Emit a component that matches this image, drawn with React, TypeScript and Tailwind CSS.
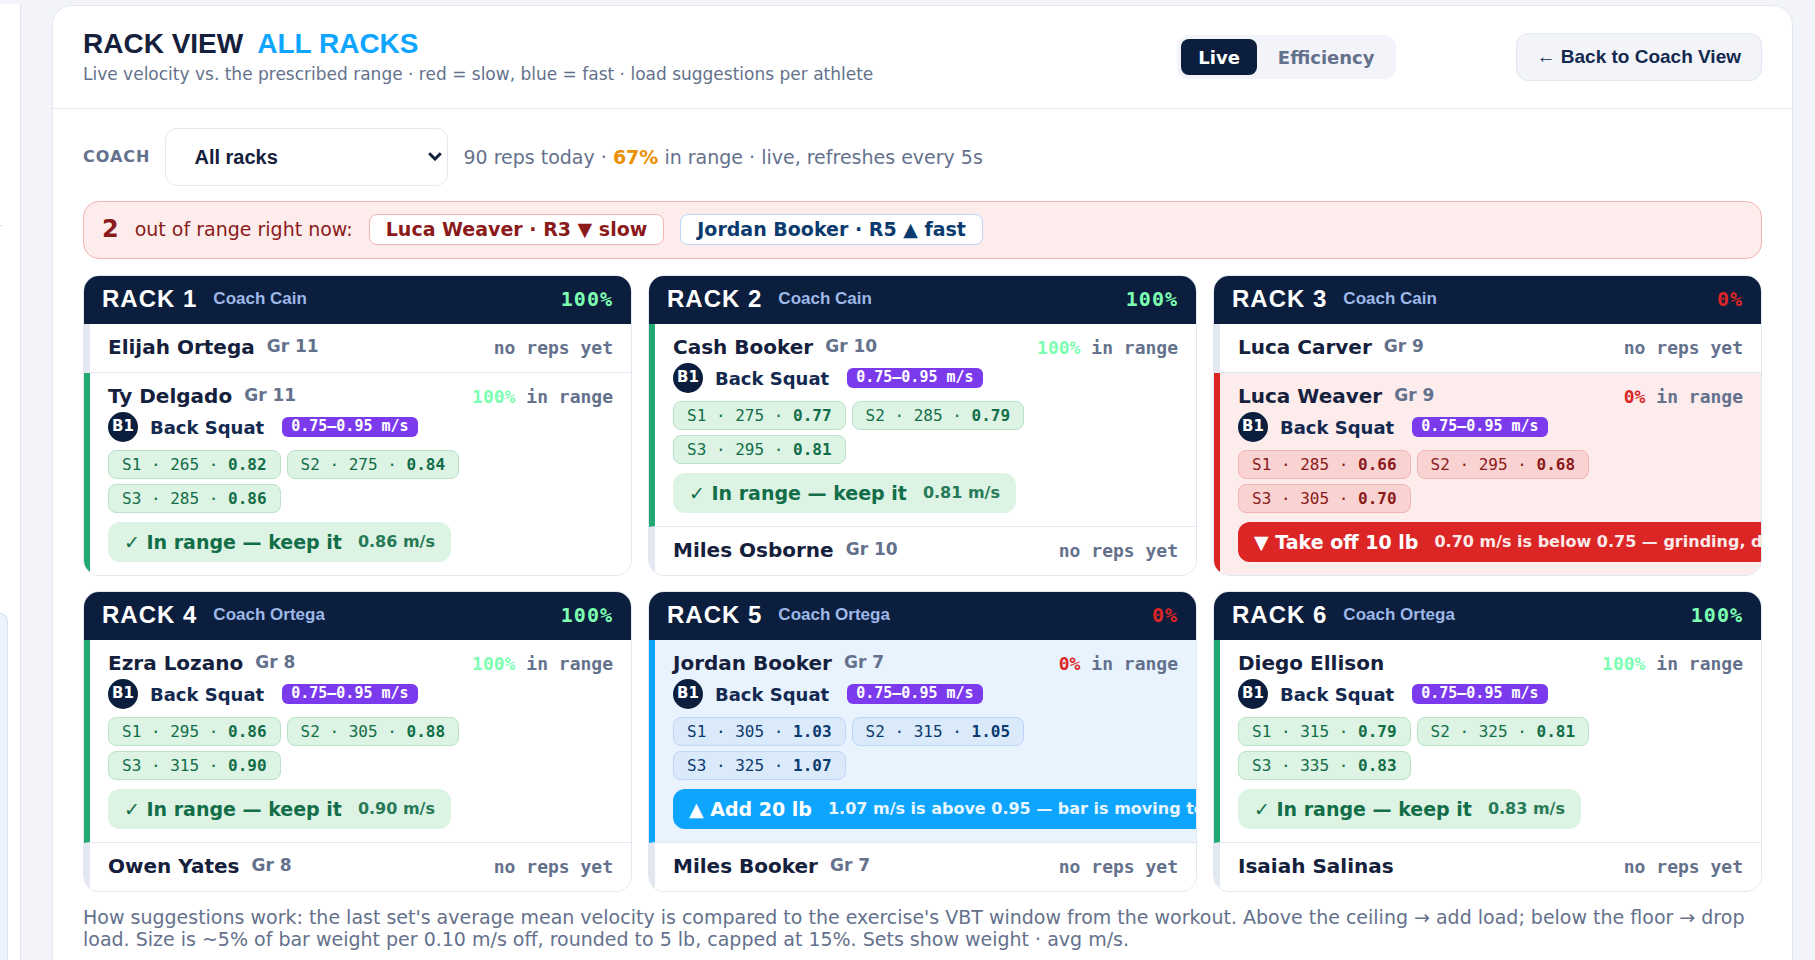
import { useState } from 'react';
import clsx from 'clsx';

type Tone = 'ok' | 'slow' | 'fast' | 'idle';

type Athlete = {
  name: string;
  grade?: string;
  tone: Tone;
  pct?: number;
  sets?: [number, string][];
  call?: string;
  note?: string;
};

type Rack = { id: number; coach: string; pct: number; athletes: Athlete[] };

const RACKS: Rack[] = [
  {
    id: 1,
    coach: 'Coach Cain',
    pct: 100,
    athletes: [
      { name: 'Elijah Ortega', grade: 'Gr 11', tone: 'idle' },
      {
        name: 'Ty Delgado',
        grade: 'Gr 11',
        tone: 'ok',
        pct: 100,
        sets: [[265, '0.82'], [275, '0.84'], [285, '0.86']],
        call: '✓ In range — keep it',
        note: '0.86 m/s',
      },
    ],
  },
  {
    id: 2,
    coach: 'Coach Cain',
    pct: 100,
    athletes: [
      {
        name: 'Cash Booker',
        grade: 'Gr 10',
        tone: 'ok',
        pct: 100,
        sets: [[275, '0.77'], [285, '0.79'], [295, '0.81']],
        call: '✓ In range — keep it',
        note: '0.81 m/s',
      },
      { name: 'Miles Osborne', grade: 'Gr 10', tone: 'idle' },
    ],
  },
  {
    id: 3,
    coach: 'Coach Cain',
    pct: 0,
    athletes: [
      { name: 'Luca Carver', grade: 'Gr 9', tone: 'idle' },
      {
        name: 'Luca Weaver',
        grade: 'Gr 9',
        tone: 'slow',
        pct: 0,
        sets: [[285, '0.66'], [295, '0.68'], [305, '0.70']],
        call: '▼ Take off 10 lb',
        note: '0.70 m/s is below 0.75 — grinding, drop the load',
      },
    ],
  },
  {
    id: 4,
    coach: 'Coach Ortega',
    pct: 100,
    athletes: [
      {
        name: 'Ezra Lozano',
        grade: 'Gr 8',
        tone: 'ok',
        pct: 100,
        sets: [[295, '0.86'], [305, '0.88'], [315, '0.90']],
        call: '✓ In range — keep it',
        note: '0.90 m/s',
      },
      { name: 'Owen Yates', grade: 'Gr 8', tone: 'idle' },
    ],
  },
  {
    id: 5,
    coach: 'Coach Ortega',
    pct: 0,
    athletes: [
      {
        name: 'Jordan Booker',
        grade: 'Gr 7',
        tone: 'fast',
        pct: 0,
        sets: [[305, '1.03'], [315, '1.05'], [325, '1.07']],
        call: '▲ Add 20 lb',
        note: '1.07 m/s is above 0.95 — bar is moving too fast',
      },
      { name: 'Miles Booker', grade: 'Gr 7', tone: 'idle' },
    ],
  },
  {
    id: 6,
    coach: 'Coach Ortega',
    pct: 100,
    athletes: [
      {
        name: 'Diego Ellison',
        tone: 'ok',
        pct: 100,
        sets: [[315, '0.79'], [325, '0.81'], [335, '0.83']],
        call: '✓ In range — keep it',
        note: '0.83 m/s',
      },
      { name: 'Isaiah Salinas', tone: 'idle' },
    ],
  },
];

const ROW: Record<Tone, string> = {
  ok: 'border-l-[#22a872] bg-white',
  slow: 'border-l-[#dc2626] bg-[#fdecec]',
  fast: 'border-l-[#0ea5ff] bg-[#e8f3fe]',
  idle: 'border-l-[#e2e7f1] bg-white',
};

const CHIP: Record<Tone, string> = {
  ok: 'border-[#b8e3c8] bg-[#ddf3e4] text-[#126e48]',
  slow: 'border-[#f3b4b4] bg-[#f9d2d2] text-[#8b1a1a]',
  fast: 'border-[#bcd5f8] bg-[#dbeafa] text-[#0b3b6e]',
  idle: '',
};

const CALL: Record<Tone, string> = {
  ok: 'bg-[#ddf3e4] text-[#126e48]',
  slow: 'bg-[#dc2626] text-white',
  fast: 'bg-[#0ea5ff] text-white',
  idle: '',
};

const MONO = "font-['DejaVu_Sans_Mono',monospace]";
const ARIAL = "font-['Liberation_Sans',sans-serif]";

const pctColor = (pct: number) => (pct >= 80 ? 'text-[#7dffb2]' : 'text-[#dc2626]');

function AthleteRow({ athlete }: { athlete: Athlete }) {
  const { name, grade, tone, pct, sets, call, note } = athlete;
  return (
    <div
      className={clsx(
        'border-b border-l-6 border-b-[#e2e7f1] px-[18px] pt-[11px] pb-[13px] last:border-b-0',
        ROW[tone],
      )}
    >
      <div className="flex h-6 items-center justify-between">
        <div className="flex items-center gap-3">
          <span className="text-[20px] font-bold text-[#14203c]">{name}</span>
          {grade && <span className="text-[17px] font-bold text-[#64718c]">{grade}</span>}
        </div>
        <span className={clsx('text-[18px] font-bold text-[#64718c]', MONO)}>
          {pct === undefined ? (
            'no reps yet'
          ) : (
            <>
              <span className={pctColor(pct)}>{pct}%</span> in range
            </>
          )}
        </span>
      </div>
      {sets && (
        <>
          <div className="mt-1 flex items-center">
            <span className="flex size-[30px] items-center justify-center rounded-full bg-[#0b1e3d] pb-0.5 text-[15px] font-bold text-white">
              B1
            </span>
            <span className="ml-3 text-[18px] font-bold text-[#13294f]">Back Squat</span>
            <span
              className={clsx(
                'ml-[18px] rounded-md bg-[#7c3aed] px-[9px] pb-0.5 text-[15px] leading-[18px] font-bold text-white',
                MONO,
              )}
            >
              0.75–0.95 m/s
            </span>
          </div>
          <div className="mt-2 flex max-w-[400px] flex-wrap gap-x-[6px] gap-y-[5px]">
            {sets.map(([weight, velocity], i) => (
              <span
                key={weight}
                className={clsx('rounded-lg border px-[13px] text-[16px] leading-[27px]', CHIP[tone], MONO)}
              >
                S{i + 1} · {weight} · <b>{velocity}</b>
              </span>
            ))}
          </div>
          <div
            className={clsx(
              'mt-[9px] inline-flex h-10 items-center gap-4 rounded-xl px-4 align-top whitespace-nowrap',
              CALL[tone],
            )}
          >
            <span className="text-[19px] font-bold">{call}</span>
            <span className="text-[16px] font-bold opacity-90">{note}</span>
          </div>
        </>
      )}
    </div>
  );
}

function RackCard({ rack }: { rack: Rack }) {
  return (
    <section className="min-w-0 overflow-hidden rounded-2xl border border-[#e2e7f1] bg-white">
      <header className="flex h-12 items-center justify-between bg-[#0b1e3d] px-[18px] pb-[3px] tracking-[1px]">
        <div className={clsx('flex items-center gap-4', ARIAL)}>
          <h2 className="text-[24px] font-bold text-white">RACK {rack.id}</h2>
          <span className="text-[17px] font-bold tracking-normal text-[#9db8e8]">{rack.coach}</span>
        </div>
        <span className={clsx('text-[20px] font-bold', pctColor(rack.pct), MONO)}>{rack.pct}%</span>
      </header>
      {rack.athletes.map((athlete) => (
        <AthleteRow key={athlete.name} athlete={athlete} />
      ))}
    </section>
  );
}

export default function App() {
  const [mode, setMode] = useState('Live');

  return (
    <div className="flex h-screen items-start overflow-hidden bg-[#f3f4f9] pr-[22px] font-['DejaVu_Sans',sans-serif]">
      <aside className="mt-1 mr-[31px] flex h-full w-[21px] shrink-0 flex-col border-r border-[#e2e7f1] bg-white">
        <div className="mt-[221px] h-px w-0.5 bg-[#d5dae4]" />
        <div className="mt-[387px] w-2 grow rounded-tr-2xl border-t border-r border-[#d6e3f7] bg-[#edf3fd]" />
      </aside>

      <main className="mt-[5px] min-w-0 flex-1 rounded-[20px] border border-[#e2e7f1] bg-white">
        <header className="flex items-center justify-between border-b border-[#e2e7f1] px-[30px] py-[22px]">
          <div>
            <h1 className={clsx('mb-0.5 flex gap-[14px] text-[28px] leading-8 font-bold text-[#14203c]', ARIAL)}>
              RACK VIEW <span className="text-[#0ea5ff]">ALL RACKS</span>
            </h1>
            <p className="text-[17px] leading-6 text-[#64718c]">
              Live velocity vs. the prescribed range · red = slow, blue = fast · load suggestions per athlete
            </p>
          </div>
          <div className="flex items-center gap-[120px]">
            <div className="flex gap-1 rounded-xl bg-[#f3f4f9] p-1">
              {['Live', 'Efficiency'].map((label) => (
                <button
                  key={label}
                  type="button"
                  onClick={() => setMode(label)}
                  className={clsx(
                    'h-9 rounded-lg px-[17px] text-[18px] font-bold',
                    mode === label ? 'bg-[#0b1e3d] text-white' : 'text-[#64718c]',
                  )}
                >
                  {label}
                </button>
              ))}
            </div>
            <button
              type="button"
              className={clsx(
                'h-12 rounded-xl border border-[#e2e7f1] bg-[#f3f4f9] px-5 text-[19px] font-bold text-[#13294f]',
                ARIAL,
              )}
            >
              ← Back to Coach View
            </button>
          </div>
        </header>

        <div className="px-[30px] pt-[19px] pb-[30px]">
          <div className="flex items-center gap-[15px]">
            <label htmlFor="coach" className="text-[16px] font-bold tracking-[1px] text-[#64718c]">
              COACH
            </label>
            <div className="relative">
              <select
                id="coach"
                className={clsx(
                  'h-[58px] w-[283px] appearance-none rounded-xl border border-[#e2e7f1] bg-white pl-7 text-[20px] font-bold text-[#14203c]',
                  ARIAL,
                )}
              >
                <option>All racks</option>
                <option>Coach Cain</option>
                <option>Coach Ortega</option>
              </select>
              <svg
                viewBox="0 0 14 9"
                className="pointer-events-none absolute top-[24px] right-[6px] h-[9px] w-[14px]"
                fill="none"
                stroke="#14203c"
                strokeWidth="3"
              >
                <path d="M1.2 1.2 7 7l5.8-5.8" />
              </svg>
            </div>
            <p className="text-[19px] text-[#64718c]">
              90 reps today · <b className="text-[#eb9000]">67%</b> in range · live, refreshes every 5s
            </p>
          </div>

          <div className="mt-[15px] flex h-[58px] items-center gap-4 rounded-2xl border border-[#f3b4b4] bg-[#fdecec] px-[18px] pb-0.5 text-[19px] text-[#8b1a1a]">
            <span className="text-[24px] font-bold">2</span>
            <span>out of range right now:</span>
            <span className="rounded-lg border border-[#f3b4b4] bg-white px-4 leading-[29px] font-bold">
              Luca Weaver · R3 ▼ slow
            </span>
            <span className="rounded-lg border border-[#bcd5f8] bg-white px-4 leading-[29px] font-bold text-[#0b3b6e]">
              Jordan Booker · R5 ▲ fast
            </span>
          </div>

          <div className="mt-4 grid grid-cols-3 gap-x-4 gap-y-[15px]">
            {RACKS.map((rack) => (
              <RackCard key={rack.id} rack={rack} />
            ))}
          </div>

          <p className="mt-[14px] text-[19px] leading-[22px] text-[#64718c]">
            How suggestions work: the last set's average mean velocity is compared to the exercise's VBT window from the
            workout. Above the ceiling → add load; below the floor → drop load. Size is ~5% of bar weight per 0.10 m/s
            off, rounded to 5 lb, capped at 15%. Sets show weight · avg m/s.
          </p>
        </div>
      </main>
    </div>
  );
}
